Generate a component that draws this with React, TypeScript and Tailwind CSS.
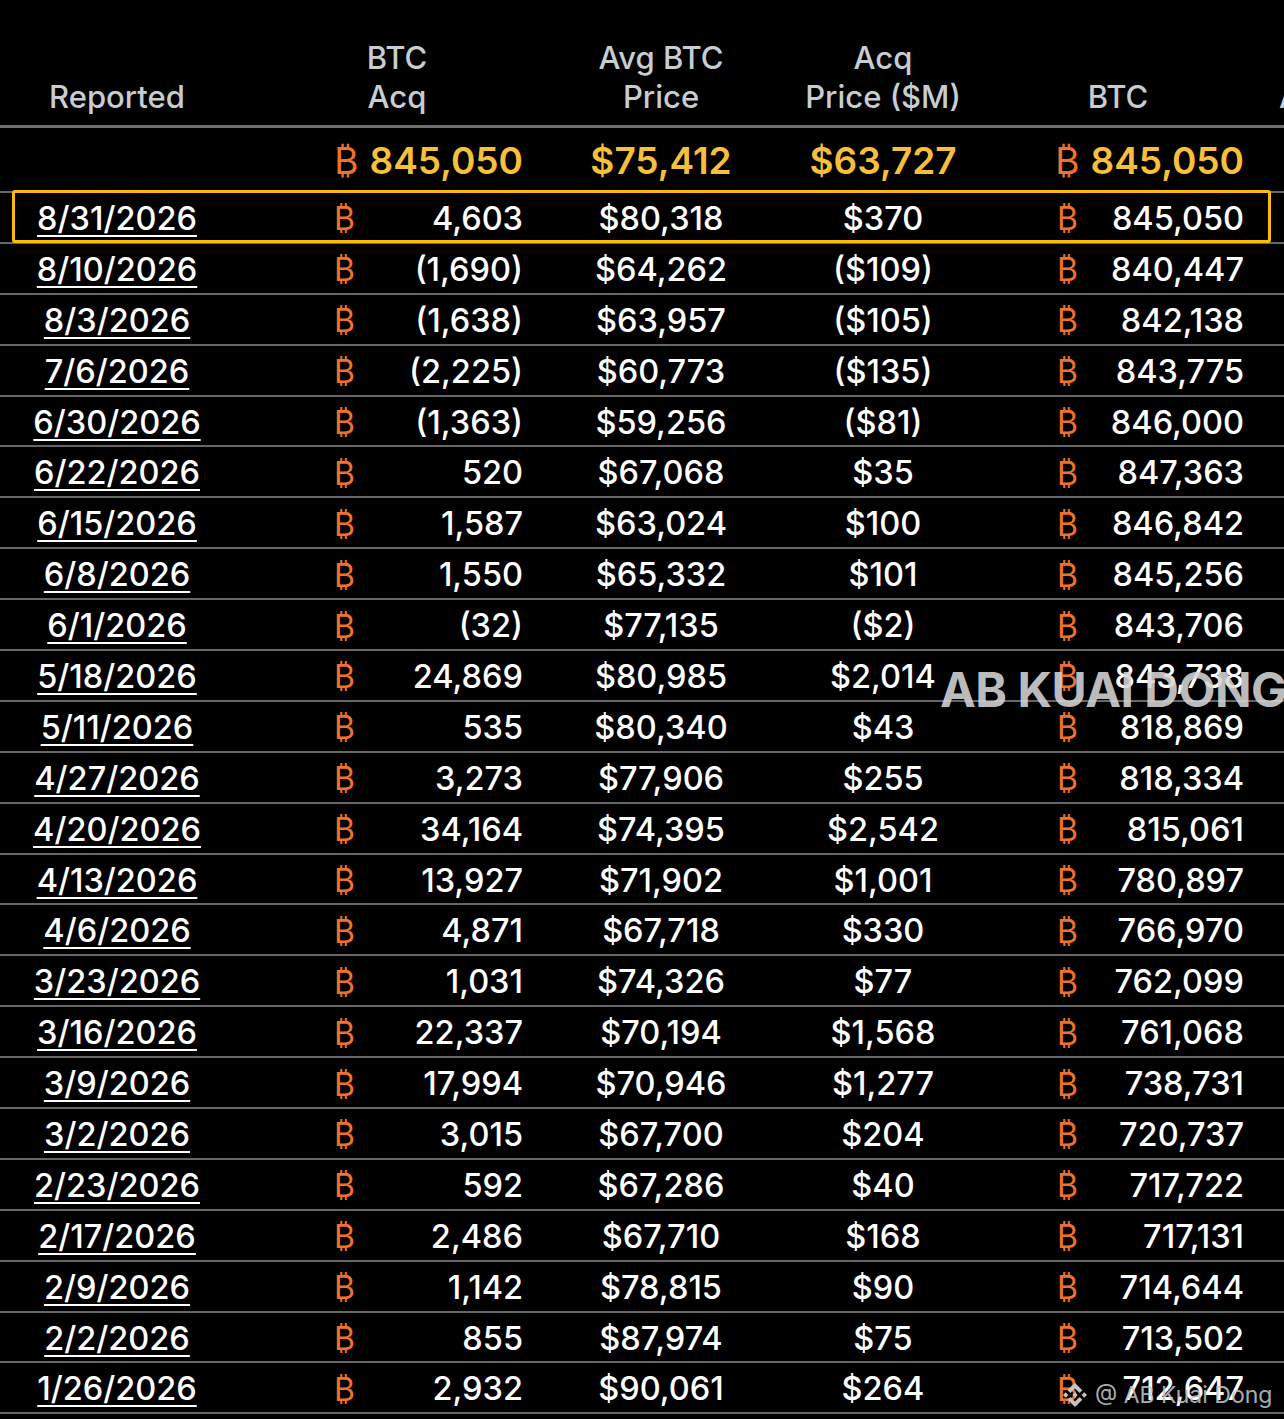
import React from "react";

type Row = {
  date: string;
  acq: string;
  avg: string;
  price: string;
  total: string;
};

const rows: Row[] = [
  { date: "8/31/2026", acq: "4,603", avg: "$80,318", price: "$370", total: "845,050" },
  { date: "8/10/2026", acq: "(1,690)", avg: "$64,262", price: "($109)", total: "840,447" },
  { date: "8/3/2026", acq: "(1,638)", avg: "$63,957", price: "($105)", total: "842,138" },
  { date: "7/6/2026", acq: "(2,225)", avg: "$60,773", price: "($135)", total: "843,775" },
  { date: "6/30/2026", acq: "(1,363)", avg: "$59,256", price: "($81)", total: "846,000" },
  { date: "6/22/2026", acq: "520", avg: "$67,068", price: "$35", total: "847,363" },
  { date: "6/15/2026", acq: "1,587", avg: "$63,024", price: "$100", total: "846,842" },
  { date: "6/8/2026", acq: "1,550", avg: "$65,332", price: "$101", total: "845,256" },
  { date: "6/1/2026", acq: "(32)", avg: "$77,135", price: "($2)", total: "843,706" },
  { date: "5/18/2026", acq: "24,869", avg: "$80,985", price: "$2,014", total: "843,738" },
  { date: "5/11/2026", acq: "535", avg: "$80,340", price: "$43", total: "818,869" },
  { date: "4/27/2026", acq: "3,273", avg: "$77,906", price: "$255", total: "818,334" },
  { date: "4/20/2026", acq: "34,164", avg: "$74,395", price: "$2,542", total: "815,061" },
  { date: "4/13/2026", acq: "13,927", avg: "$71,902", price: "$1,001", total: "780,897" },
  { date: "4/6/2026", acq: "4,871", avg: "$67,718", price: "$330", total: "766,970" },
  { date: "3/23/2026", acq: "1,031", avg: "$74,326", price: "$77", total: "762,099" },
  { date: "3/16/2026", acq: "22,337", avg: "$70,194", price: "$1,568", total: "761,068" },
  { date: "3/9/2026", acq: "17,994", avg: "$70,946", price: "$1,277", total: "738,731" },
  { date: "3/2/2026", acq: "3,015", avg: "$67,700", price: "$204", total: "720,737" },
  { date: "2/23/2026", acq: "592", avg: "$67,286", price: "$40", total: "717,722" },
  { date: "2/17/2026", acq: "2,486", avg: "$67,710", price: "$168", total: "717,131" },
  { date: "2/9/2026", acq: "1,142", avg: "$78,815", price: "$90", total: "714,644" },
  { date: "2/2/2026", acq: "855", avg: "$87,974", price: "$75", total: "713,502" },
  { date: "1/26/2026", acq: "2,932", avg: "$90,061", price: "$264", total: "712,647" },
];

const cols = "grid grid-cols-[234px_306px_242px_202px_278px_200px]";

const Btc = ({ big }: { big?: boolean }) => (
  <span
    className={`text-[#f0722a] font-normal ${big ? "text-[37px]" : "text-[32px]"}`}
  >
    ₿
  </span>
);

const BinanceMark = () => (
  <svg viewBox="0 0 24 24" className="h-[24px] w-[24px]" fill="#c4c4c4">
    <path d="M16.624 13.9202l2.7175 2.7154-7.353 7.353-7.353-7.352 2.7175-2.7164 4.6355 4.6595 4.6356-4.6595zm4.6366-4.6366L24 12l-2.7154 2.7164L18.5682 12l2.6924-2.7164zm-9.272.001l2.7163 2.6914-2.7164 2.7174v-.001L9.2721 12l2.7164-2.7154zm-9.2722-.001L5.4088 12l-2.6914 2.6924L0 12l2.7164-2.7164zM11.9885.0115l7.353 7.329-2.7174 2.7154-4.6356-4.6356-4.6355 4.6595-2.7174-2.7154 7.353-7.353z" />
  </svg>
);

export default function App() {
  return (
    <div
      className="relative w-[1284px] h-[1419px] overflow-hidden bg-black text-white"
      style={{ fontFamily: "Inter, 'Noto Sans', 'DejaVu Sans', sans-serif" }}
    >
      {/* Header */}
      <div
        className={`${cols} h-[128px] items-end border-b-[3px] border-[#6e7173] pb-[9px] text-[31px] font-medium leading-[39px] text-[#c7cdd1]`}
      >
        <div className="text-center">Reported</div>
        <div className="pl-[20px] text-center">
          BTC
          <br />
          Acq
        </div>
        <div className="text-center">
          Avg BTC
          <br />
          Price
        </div>
        <div className="text-center">
          Acq
          <br />
          Price ($M)
        </div>
        <div className="pr-[10px] text-center">BTC</div>
        <div className="pl-[17px] whitespace-nowrap">Avg Cost</div>
      </div>

      {/* Totals */}
      <div
        className={`${cols} h-[65px] items-center border-b-2 border-[#666] pt-[2px] text-[37px] font-semibold text-[#f7bf3a]`}
      >
        <div />
        <div className="flex items-center justify-end gap-[11px] pr-[17px]">
          <Btc big />
          <span>845,050</span>
        </div>
        <div className="text-center">$75,412</div>
        <div className="text-center">$63,727</div>
        <div className="flex items-center justify-end gap-[11px] pr-[18px]">
          <Btc big />
          <span>845,050</span>
        </div>
        <div />
      </div>

      {/* Rows */}
      {rows.map((r, i) => (
        <div
          key={r.date}
          className={`${cols} relative h-[50.9px] items-center border-b-2 border-[#666] pt-[2px] text-[32.5px] font-medium`}
        >
          {i === 0 && (
            <div className="pointer-events-none absolute left-[12px] top-[-3px] bottom-[-1px] w-[1259px] rounded-[3px] border-[3px] border-[#fbbc05]" />
          )}
          <div className="text-center">
            <span className="underline decoration-2 underline-offset-[5px]">{r.date}</span>
          </div>
          <div className="flex items-center justify-between pl-[100px] pr-[17px]">
            <Btc />
            <span>{r.acq}</span>
          </div>
          <div className="text-center">{r.avg}</div>
          <div className="text-center">{r.price}</div>
          <div className="flex items-center justify-between pl-[73px] pr-[18px]">
            <Btc />
            <span>{r.total}</span>
          </div>
          <div />
        </div>
      ))}

      {/* Watermarks */}
      <div className="pointer-events-none absolute left-[940px] top-[666px] whitespace-nowrap text-[48px] font-bold leading-none tracking-[-0.5px] text-[#d6d6d6]/90">
        AB KUAI DONG
      </div>
      <div className="pointer-events-none absolute left-[1063px] top-[1378px] flex items-center gap-[8px] text-[23px] text-[#c4c4c4]/90">
        <BinanceMark />
        <span>@ AB Kuai Dong</span>
      </div>
    </div>
  );
}
